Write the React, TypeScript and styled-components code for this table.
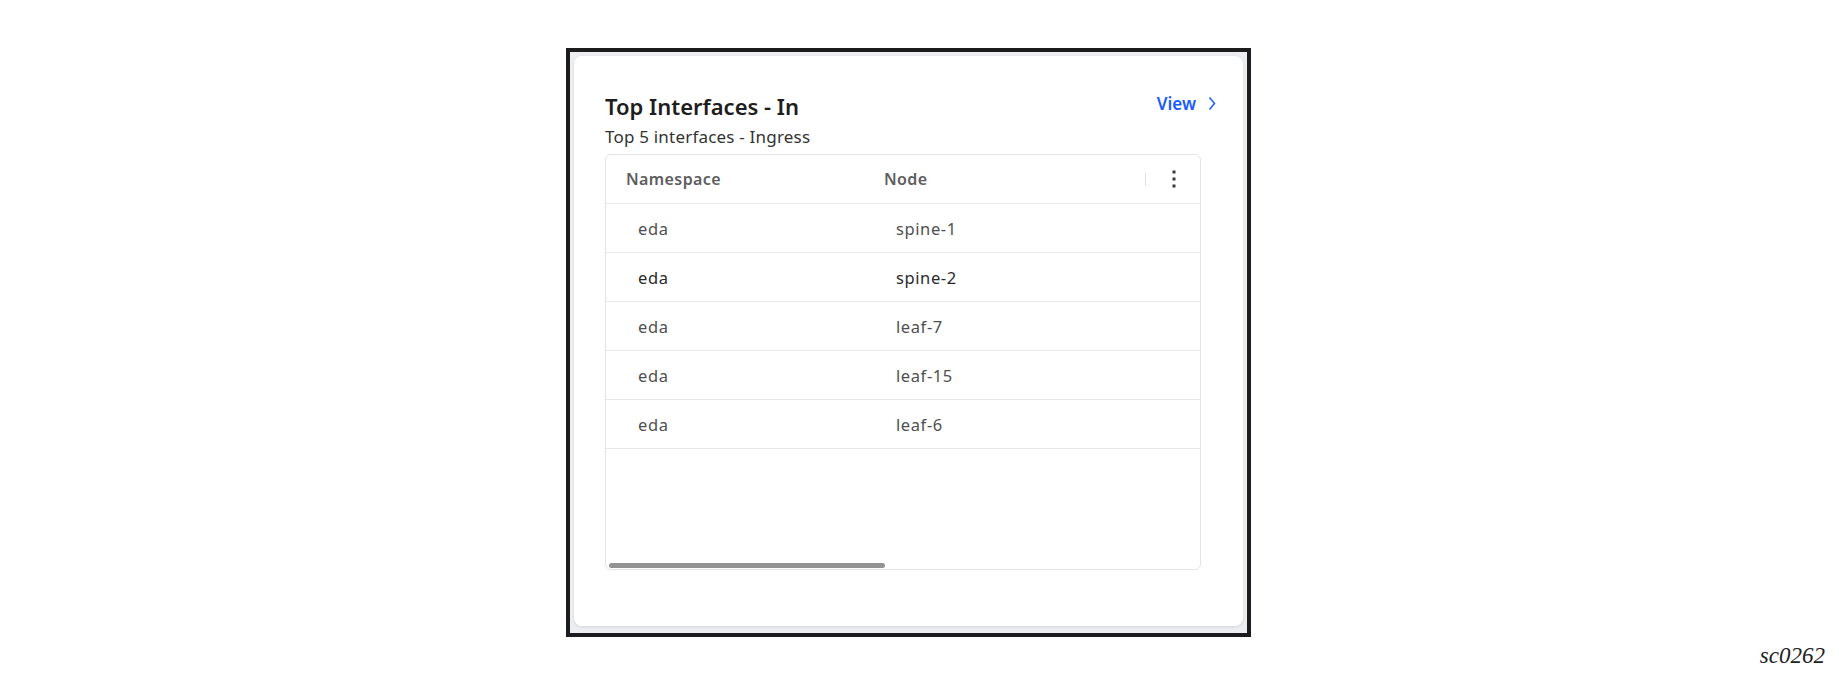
import * as React from 'react';
import styled, { createGlobalStyle } from 'styled-components';

const GlobalStyle = createGlobalStyle`
  body {
    margin: 0;
    background: #ffffff;
    font-family: 'Noto Sans', 'Liberation Sans', sans-serif;
  }
`;

type Row = { namespace: string; node: string; active?: boolean };

const rows: Row[] = [
  { namespace: 'eda', node: 'spine-1' },
  { namespace: 'eda', node: 'spine-2', active: true },
  { namespace: 'eda', node: 'leaf-7' },
  { namespace: 'eda', node: 'leaf-15' },
  { namespace: 'eda', node: 'leaf-6' },
];

const Page = styled.div`
  width: 1839px;
  height: 680px;
  box-sizing: border-box;
  padding: 48px 14px 0 566px;
  display: flex;
  flex-direction: column;
`;

const Frame = styled.div`
  width: 685px;
  height: 589px;
  box-sizing: border-box;
  border: 4px solid #1c1c1e;
  background: #eceef2;
  padding: 4px 4px 7px 4px;
  display: flex;
`;

const Card = styled.div`
  flex: 1;
  background: #ffffff;
  border-radius: 8px;
  box-shadow: 0 1px 3px rgba(30, 40, 60, 0.12);
  padding: 35px 27px 0 31px;
  display: flex;
  flex-direction: column;
`;

const CardHeader = styled.div`
  display: flex;
  justify-content: space-between;
  align-items: flex-start;
`;

const Title = styled.h2`
  margin: 0;
  font-size: 22px;
  line-height: 30px;
  font-weight: 600;
  color: #1e1e1e;
`;

const Subtitle = styled.div`
  font-size: 17px;
  line-height: 24px;
  color: #333333;
  margin-top: 4px;
  letter-spacing: 0.2px;
`;

const ViewLink = styled.a`
  display: flex;
  align-items: center;
  gap: 12px;
  margin-top: 1px;
  font-size: 17px;
  font-weight: 600;
  color: #1a5bff;
  text-decoration: none;
  cursor: pointer;
`;

const Table = styled.div`
  margin-top: 5px;
  margin-right: 15px;
  height: 416px;
  box-sizing: border-box;
  border: 1px solid #e2e4e8;
  border-radius: 6px;
  display: flex;
  flex-direction: column;
  overflow: hidden;
`;

const HeaderRow = styled.div`
  display: grid;
  grid-template-columns: 258px 281px 1fr;
  height: 49px;
  align-items: center;
  border-bottom: 1px solid #e6e8eb;
  box-sizing: border-box;
`;

const HeaderCell = styled.div`
  padding-left: 20px;
  font-size: 16px;
  font-weight: 600;
  color: #5e5e5e;
  letter-spacing: 0.4px;
`;

const Divider = styled.div`
  width: 1px;
  height: 13px;
  background: #dcdee2;
`;

const MenuCell = styled.div`
  display: flex;
  align-items: center;
  justify-content: space-between;
  padding-right: 24px;
  height: 100%;
`;

const BodyRow = styled.div<{ $active?: boolean }>`
  display: grid;
  grid-template-columns: 258px 281px 1fr;
  height: 49px;
  align-items: center;
  border-bottom: 1px solid #e6e8eb;
  box-sizing: border-box;
  color: ${p => (p.$active ? '#2a2a2a' : '#505050')};
`;

const BodyCell = styled.div`
  padding-left: 32px;
  font-size: 16.5px;
  letter-spacing: 0.6px;
`;

const Filler = styled.div`
  flex: 1;
  display: flex;
  flex-direction: column;
  justify-content: flex-end;
  padding: 0 0 1px 3px;
`;

const ScrollThumb = styled.div`
  width: 276px;
  height: 5px;
  border-radius: 3px;
  background: #939393;
`;

const Caption = styled.div`
  align-self: flex-end;
  margin-top: 6px;
  font-family: 'Liberation Serif', serif;
  font-style: italic;
  font-size: 23px;
  color: #222222;
`;

const Kebab = () => (
  <svg width="4" height="18" viewBox="0 0 4 18">
    <rect x="0.5" y="0.5" width="3" height="3" fill="#3a3a3a" />
    <rect x="0.5" y="7.5" width="3" height="3" fill="#3a3a3a" />
    <rect x="0.5" y="14.5" width="3" height="3" fill="#3a3a3a" />
  </svg>
);

const Chevron = () => (
  <svg width="8" height="15" viewBox="0 0 8 15">
    <path d="M1.5 1.5 L6.5 7.5 L1.5 13.5" fill="none" stroke="#1a5bff" strokeWidth="1.5" />
  </svg>
);

export default function App() {
  return (
    <>
      <GlobalStyle />
      <Page>
        <Frame>
          <Card>
            <CardHeader>
              <div>
                <Title>Top Interfaces - In</Title>
                <Subtitle>Top 5 interfaces - Ingress</Subtitle>
              </div>
              <ViewLink>
                View <Chevron />
              </ViewLink>
            </CardHeader>
            <Table>
              <HeaderRow>
                <HeaderCell>Namespace</HeaderCell>
                <HeaderCell>Node</HeaderCell>
                <MenuCell>
                  <Divider />
                  <Kebab />
                </MenuCell>
              </HeaderRow>
              {rows.map(r => (
                <BodyRow key={r.node} $active={r.active}>
                  <BodyCell>{r.namespace}</BodyCell>
                  <BodyCell>{r.node}</BodyCell>
                  <div />
                </BodyRow>
              ))}
              <Filler>
                <ScrollThumb />
              </Filler>
            </Table>
          </Card>
        </Frame>
        <Caption>sc0262</Caption>
      </Page>
    </>
  );
}
